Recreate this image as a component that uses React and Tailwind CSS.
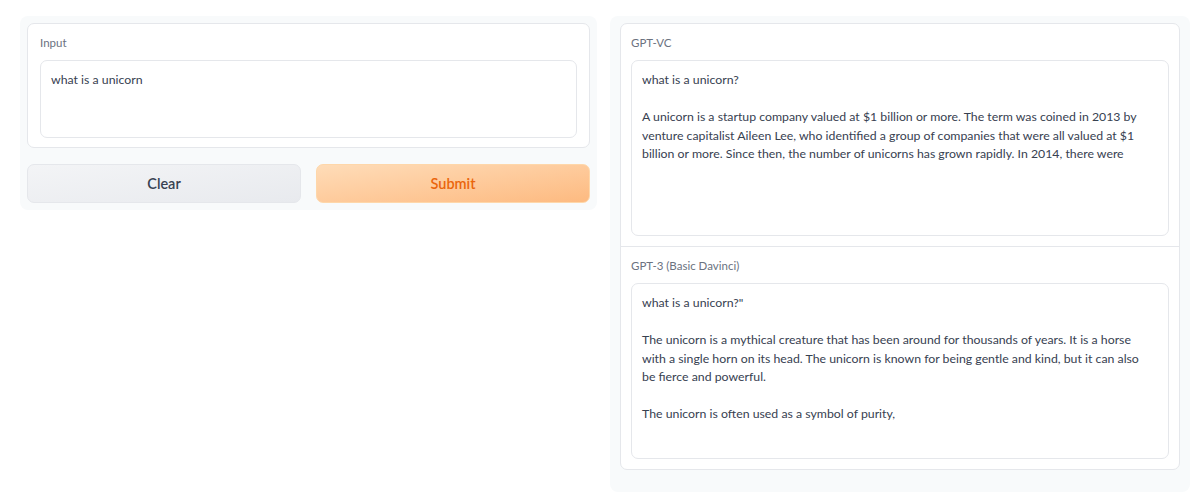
import React from 'react';

const font = { fontFamily: '"Source Sans Pro", Lato, "Noto Sans", sans-serif' };

function Field({ label, lines, height, pad, pb = 'pb-[10px]' }) {
  return (
    <div className={`${pad} pt-[11px] ${pb}`}>
      <div className="text-[11.5px] leading-[16px] text-[#6b7280] mb-[9px]">{label}</div>
      <div
        className={`rounded-[7px] border border-[#e5e7eb] bg-white px-[10px] pt-[10px] text-[12.3px] leading-[18.5px] text-[#374151] ${height}`}
      >
        {lines.map((l, i) =>
          l === '' ? <div key={i} className="h-[18.5px]" /> : <div key={i} className="whitespace-nowrap">{l}</div>
        )}
      </div>
    </div>
  );
}

export default function App() {
  return (
    <div className="w-[1200px] h-[502px] bg-white flex items-start pt-[16px] pl-[20px] gap-[13px]" style={font}>
      <div className="w-[577px] rounded-[8px] bg-[#f8fafb] p-[7px]">
        <div className="rounded-[7px] border border-[#e5e7eb] bg-white">
          <Field label="Input" lines={['what is a unicorn']} height="h-[78px]" pad="px-[12px]" pb="pb-[9px]" />
        </div>
        <div className="flex gap-[15px] mt-[16px]">
          <button className="flex-1 h-[39px] rounded-[7px] border border-[#e5e7eb] bg-gradient-to-br from-[#f3f4f6] to-[#e8eaee] text-[14.5px] font-semibold text-[#374151]">
            Clear
          </button>
          <button className="flex-1 h-[39px] rounded-[7px] border border-[#fed7aa] bg-gradient-to-br from-[#fedcb8] to-[#fdba80] text-[14.5px] font-semibold text-[#ea650c]">
            Submit
          </button>
        </div>
      </div>
      <div className="w-[580px] h-[476px] rounded-[8px] bg-[#f8fafb] px-[10px] pt-[7px]">
        <div className="rounded-[7px] border border-[#e5e7eb] bg-white">
          <Field
            label="GPT-VC"
            pad="px-[10px]"
            lines={[
              'what is a unicorn?',
              '',
              'A unicorn is a startup company valued at $1 billion or more. The term was coined in 2013 by',
              'venture capitalist Aileen Lee, who identified a group of companies that were all valued at $1',
              'billion or more. Since then, the number of unicorns has grown rapidly. In 2014, there were',
            ]}
            height="h-[176px]"
          />
          <div className="border-t border-[#e5e7eb]" />
          <Field
            label="GPT-3 (Basic Davinci)"
            pad="px-[10px]"
            lines={[
              'what is a unicorn?"',
              '',
              'The unicorn is a mythical creature that has been around for thousands of years. It is a horse',
              'with a single horn on its head. The unicorn is known for being gentle and kind, but it can also',
              'be fierce and powerful.',
              '',
              'The unicorn is often used as a symbol of purity,',
            ]}
            height="h-[176px]"
          />
        </div>
      </div>
    </div>
  );
}
